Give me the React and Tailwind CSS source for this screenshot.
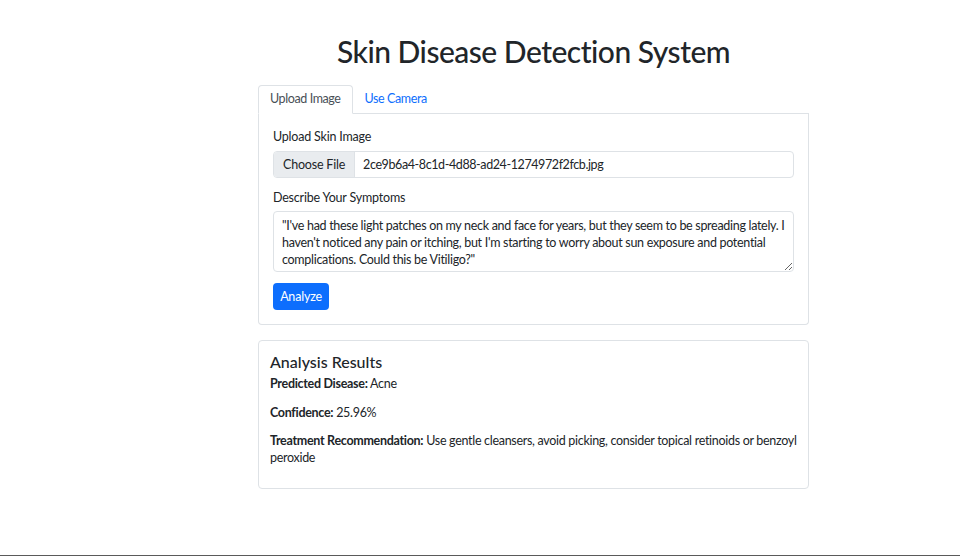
import { useState } from "react";

const symptoms =
  "\"I've had these light patches on my neck and face for years, but they seem to be spreading lately. I haven't noticed any pain or itching, but I'm starting to worry about sun exposure and potential complications. Could this be Vitiligo?\"";

export default function App() {
  const [tab, setTab] = useState("upload");

  return (
    <div
      className="relative h-[556px] w-full overflow-hidden bg-white text-[#212529] border-b border-[#5a5a5a]"
      style={{ fontFamily: 'Lato, "Noto Sans", sans-serif' }}
    >
      <div className="ml-[258px] w-[551px] pt-[32px]">
        <h1 className="text-center text-[30px] font-medium leading-[38px] tracking-[-0.5px] mb-[15px]">
          Skin Disease Detection System
        </h1>

        {/* Tabs */}
        <div className="flex border-b border-[#dee2e6] text-[12.5px] tracking-[-0.4px]">
          <button
            className={
              tab === "upload"
                ? "-mb-px h-[29px] px-[11px] rounded-t border border-[#dee2e6] border-b-white bg-white text-[#495057]"
                : "-mb-px h-[29px] px-[11px] border border-transparent text-[#0d6efd]"
            }
            onClick={() => setTab("upload")}
          >
            Upload Image
          </button>
          <button
            className={
              tab === "camera"
                ? "-mb-px h-[29px] px-[11px] rounded-t border border-[#dee2e6] border-b-white bg-white text-[#495057]"
                : "-mb-px h-[29px] px-[11px] border border-transparent text-[#0d6efd]"
            }
            onClick={() => setTab("camera")}
          >
            Use Camera
          </button>
        </div>

        <div className="border border-t-0 border-[#dee2e6] rounded-b px-[14px] pt-[13px] pb-[14px] text-[12px] leading-[17px] tracking-[-0.2px]">
          <label className="block mb-[5px] leading-[19px] text-[12.5px]">Upload Skin Image</label>
          <div className="flex h-[27px] border border-[#dee2e6] rounded mb-[10px] overflow-hidden text-[12.5px]">
            <span className="flex items-center px-[9px] bg-[#e9ecef] border-r border-[#dee2e6]">
              Choose File
            </span>
            <span className="flex items-center px-[8px] tracking-[-0.4px]">
              2ce9b6a4-8c1d-4d88-ad24-1274972f2fcb.jpg
            </span>
          </div>

          <label className="block mb-[4px] leading-[19px] text-[12.5px]">Describe Your Symptoms</label>
          <textarea
            className="block w-full h-[61px] border border-[#dee2e6] rounded px-[8px] py-[5px] leading-[17px] mb-[11px] outline-none text-[12.5px] tracking-[-0.3px]"
            defaultValue={symptoms}
          />

          <button className="h-[27px] w-[56px] rounded bg-[#0d6efd] text-white text-[12.5px]">
            Analyze
          </button>
        </div>

        {/* Results */}
        <div className="mt-[15px] border border-[#dee2e6] rounded px-[11px] pt-[11px] pb-[10px] text-[12.5px] leading-[17px] tracking-[-0.3px]">
          <h4 className="text-[16px] font-medium leading-[19px] mb-[4px] tracking-normal">Analysis Results</h4>
          <p className="mb-[12px]">
            <strong>Predicted Disease:</strong> Acne
          </p>
          <p className="mb-[11px]">
            <strong>Confidence:</strong> 25.96%
          </p>
          <p className="mb-[12px]">
            <strong>Treatment Recommendation:</strong> Use gentle cleansers, avoid picking, consider topical retinoids or benzoyl peroxide
          </p>
        </div>
      </div>
    </div>
  );
}
